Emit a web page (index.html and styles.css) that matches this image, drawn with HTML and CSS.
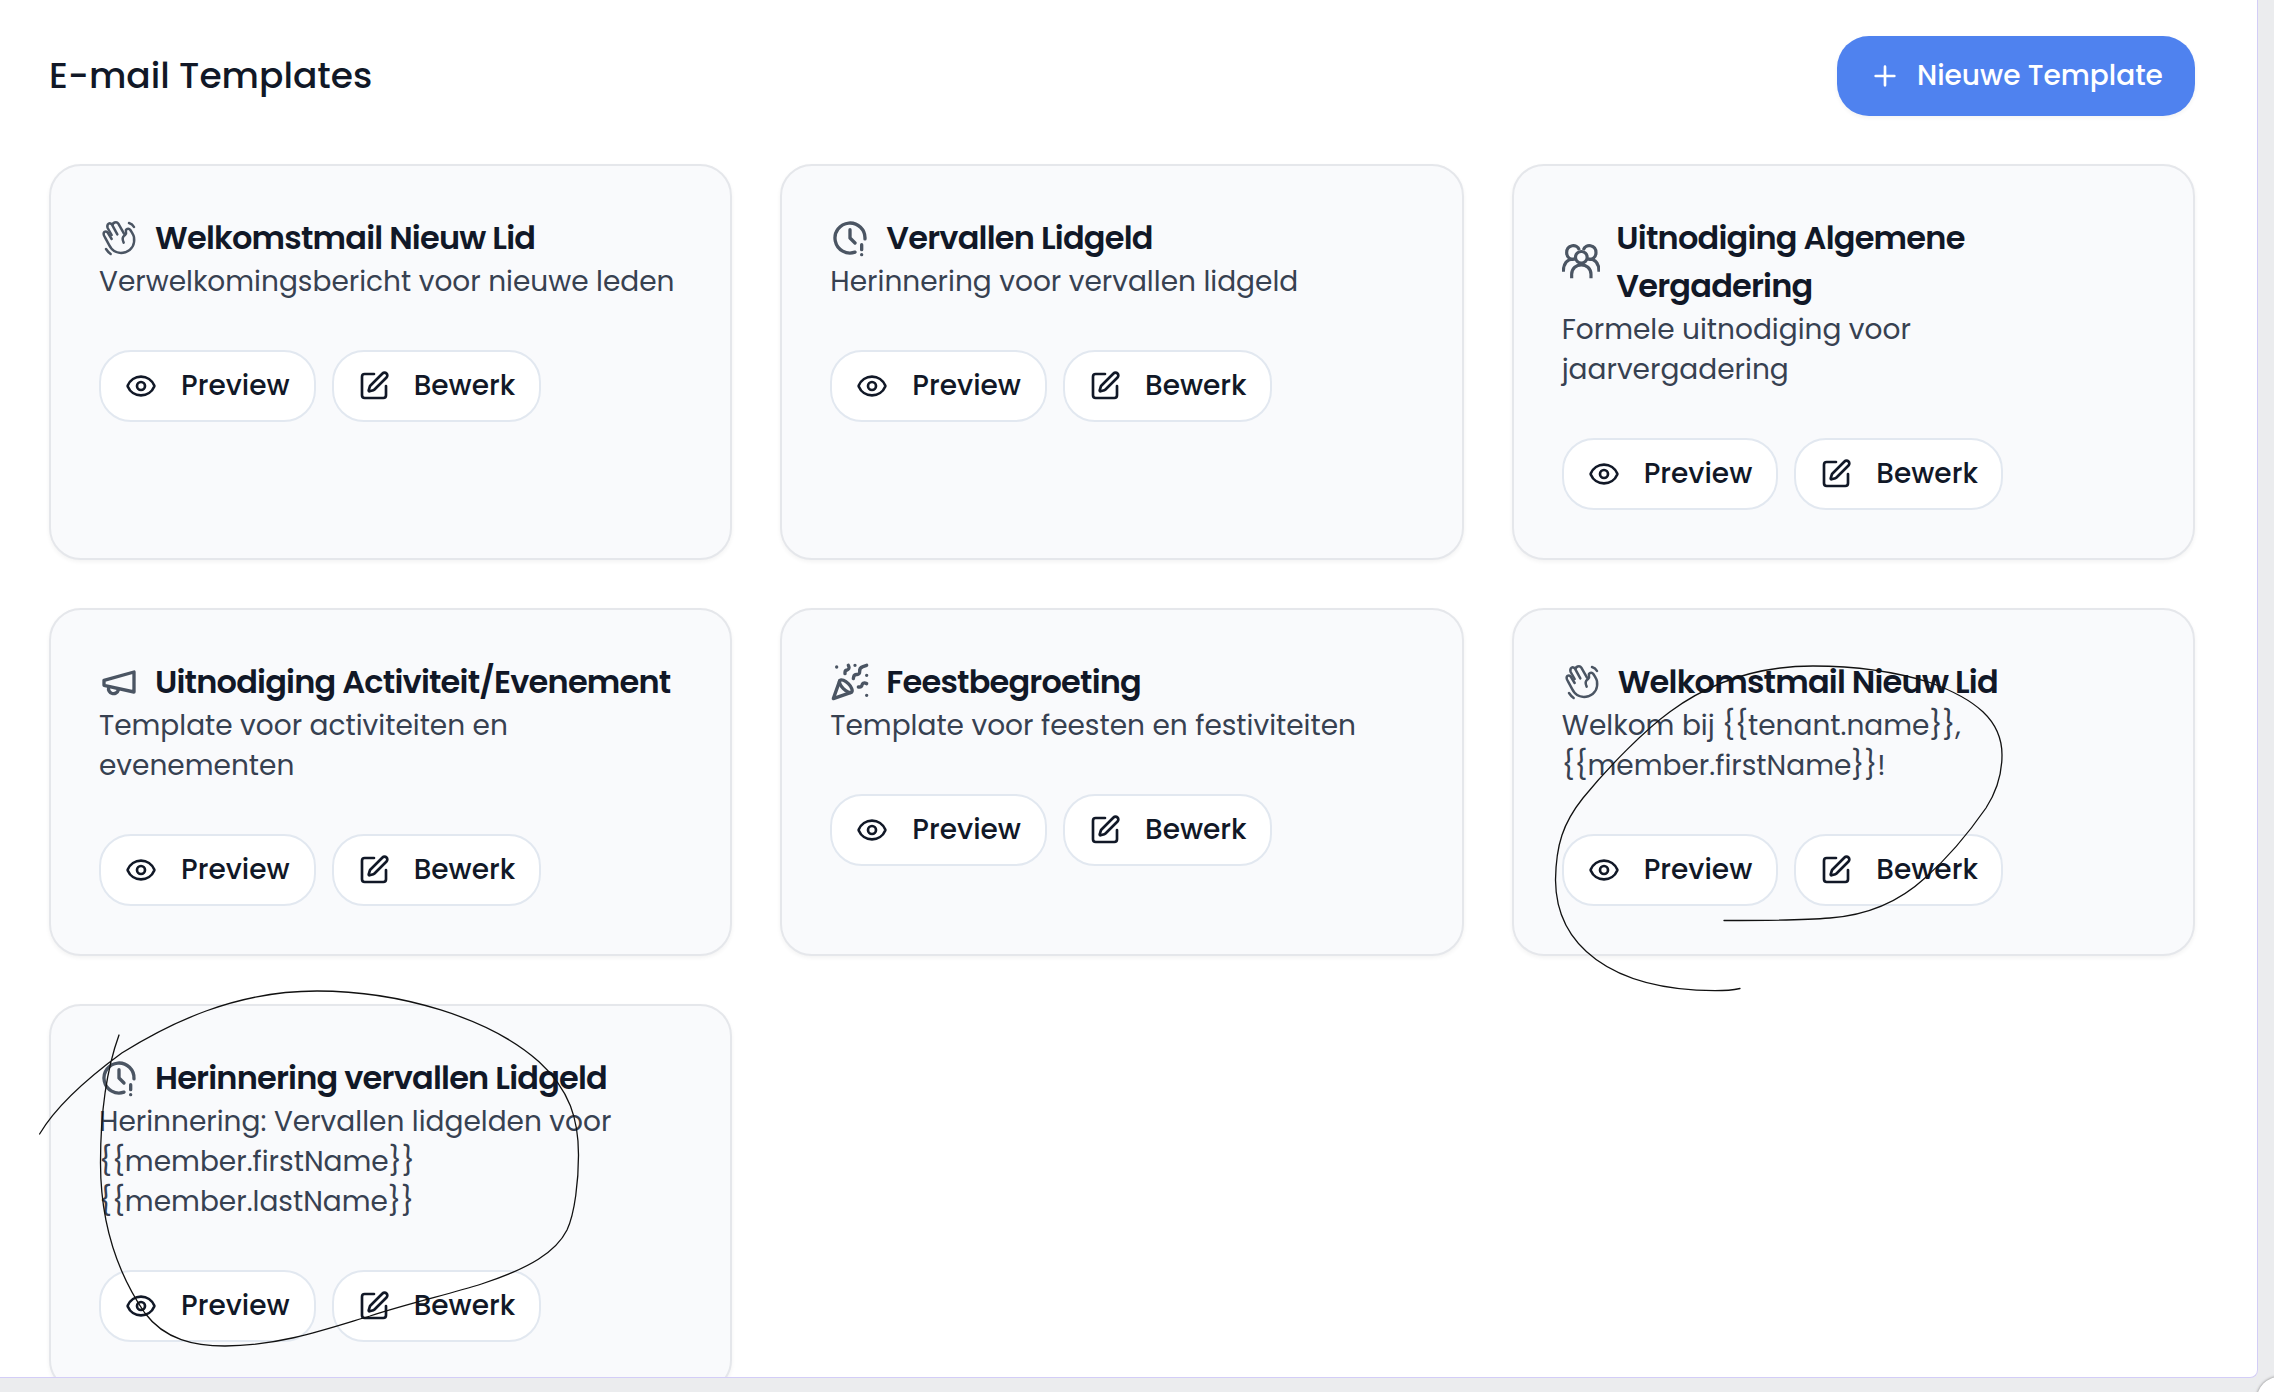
FILE: index.html
```html
<!DOCTYPE html>
<html lang="nl">
<head>
<meta charset="utf-8">
<title>E-mail Templates</title>
<link rel="stylesheet" href="styles.css">
</head>
<body>
<svg class="sprite" aria-hidden="true">
  <symbol id="eye" viewBox="0 0 24 24"><path d="M2.06 12.35a1 1 0 0 1 0-.7 10.75 10.75 0 0 1 19.88 0 1 1 0 0 1 0 .7 10.75 10.75 0 0 1-19.88 0"/><circle cx="12" cy="12" r="3"/></symbol>
  <symbol id="edit" viewBox="0 0 24 24"><path d="M12 3H5a2 2 0 0 0-2 2v14a2 2 0 0 0 2 2h14a2 2 0 0 0 2-2v-7"/><path d="M18.375 2.625a1 1 0 0 1 3 3l-9.013 9.014a2 2 0 0 1-.853.505l-2.873.84a.5.5 0 0 1-.62-.62l.84-2.873a2 2 0 0 1 .506-.852z"/></symbol>
  <symbol id="clock" viewBox="0 0 24 24"><path d="M20.986 12.502a9 9 0 1 0-5.973 7.98M12 7v5l3 3M19 16v3M19 22v.01"/></symbol>
  <symbol id="megaphone" viewBox="0 0 24 24"><path d="m3 11 18-5v12L3 14v-3z"/><path d="M11.6 16.8a3 3 0 1 1-5.8-1.6"/></symbol>
  <symbol id="party" viewBox="0 0 24 24"><path d="M5.8 11.3 2 22l10.7-3.79M4 3h.01M22 8h.01M15 2h.01M22 20h.01"/><path d="m22 2-2.24.75a2.9 2.9 0 0 0-1.96 3.12c.1.86-.57 1.63-1.45 1.63h-.38c-.86 0-1.6.6-1.76 1.44L14 10"/><path d="m22 13-.82-.33c-.86-.34-1.82.2-1.98 1.11c-.11.7-.72 1.22-1.43 1.22H17"/><path d="m11 2 .33.82c.34.86-.2 1.82-1.11 1.98C9.52 4.9 9 5.52 9 6.23V7"/><path d="M11 13c1.93 1.93 2.83 4.17 2 5-.83.83-3.07-.07-5-2-1.93-1.93-2.83-4.17-2-5 .83-.83 3.07.07 5 2Z"/></symbol>
  <symbol id="wave" viewBox="57 54 120 120"><path d="M95 117 84 99C79 91 70 95 71 103 71 106 73 109 75 112L88 136C98 156 117 162 136 157 156 150 165 132 162 112 161 107 159 103 156 98L151 90C146 83 136 87 138 95 140 101 137 103 134 106 127 111 127 120 131 128"/><path d="M95 105 83 84C79 73 90 65 96 74L112 103M102 85 98 78C96 67 110 63 115 71L132 101M147 69C154 71 159 75 162 81M78 147C82 153 86 158 92 162"/></symbol>
  <symbol id="people" viewBox="66 128 116 116"><circle cx="124" cy="171" r="17.5"/><path d="M107 175C92 181 80 171 80 157 80 133 111 128 118 149M141 175C156 181 168 171 168 157 168 133 137 128 130 149M95 234V222C95 184 153 184 153 222V234M70 214C70 190 81 176 101 176M177 214C177 190 167 176 147 176"/></symbol>
</svg>

<main class="panel">
  <header class="header">
    <h1 class="heading">E-mail Templates</h1>
    <button class="new-button"><svg class="icon-plus" viewBox="0 0 24 24"><path d="M12 5v14M5 12h14"/></svg><span>Nieuwe Template</span></button>
  </header>

  <section class="grid">
    <article class="card">
      <h2 class="title"><svg class="icon light"><use href="#wave"/></svg><span>Welkomstmail Nieuw Lid</span></h2>
      <p class="desc">Verwelkomingsbericht voor nieuwe leden</p>
      <div class="actions"><button class="action preview"><svg><use href="#eye"/></svg>Preview</button><button class="action edit"><svg><use href="#edit"/></svg>Bewerk</button></div>
    </article>
    <article class="card">
      <h2 class="title"><svg class="icon"><use href="#clock"/></svg><span>Vervallen Lidgeld</span></h2>
      <p class="desc">Herinnering voor vervallen lidgeld</p>
      <div class="actions"><button class="action preview"><svg><use href="#eye"/></svg>Preview</button><button class="action edit"><svg><use href="#edit"/></svg>Bewerk</button></div>
    </article>
    <article class="card">
      <h2 class="title"><svg class="icon group"><use href="#people"/></svg><span>Uitnodiging Algemene<br>Vergadering</span></h2>
      <p class="desc">Formele uitnodiging voor<br>jaarvergadering</p>
      <div class="actions"><button class="action preview"><svg><use href="#eye"/></svg>Preview</button><button class="action edit"><svg><use href="#edit"/></svg>Bewerk</button></div>
    </article>
    <article class="card">
      <h2 class="title"><svg class="icon"><use href="#megaphone"/></svg><span>Uitnodiging Activiteit/Evenement</span></h2>
      <p class="desc">Template voor activiteiten en<br>evenementen</p>
      <div class="actions"><button class="action preview"><svg><use href="#eye"/></svg>Preview</button><button class="action edit"><svg><use href="#edit"/></svg>Bewerk</button></div>
    </article>
    <article class="card">
      <h2 class="title"><svg class="icon"><use href="#party"/></svg><span>Feestbegroeting</span></h2>
      <p class="desc">Template voor feesten en festiviteiten</p>
      <div class="actions"><button class="action preview"><svg><use href="#eye"/></svg>Preview</button><button class="action edit"><svg><use href="#edit"/></svg>Bewerk</button></div>
    </article>
    <article class="card">
      <h2 class="title"><svg class="icon light"><use href="#wave"/></svg><span>Welkomstmail Nieuw Lid</span></h2>
      <p class="desc">Welkom bij {{tenant.name}},<br>{{member.firstName}}!</p>
      <div class="actions"><button class="action preview"><svg><use href="#eye"/></svg>Preview</button><button class="action edit"><svg><use href="#edit"/></svg>Bewerk</button></div>
    </article>
    <article class="card">
      <h2 class="title"><svg class="icon"><use href="#clock"/></svg><span>Herinnering vervallen Lidgeld</span></h2>
      <p class="desc">Herinnering: Vervallen lidgelden voor<br>{{member.firstName}}<br>{{member.lastName}}</p>
      <div class="actions"><button class="action preview"><svg><use href="#eye"/></svg>Preview</button><button class="action edit"><svg><use href="#edit"/></svg>Bewerk</button></div>
    </article>
  </section>
</main>

<div class="bubble"></div>
<svg class="ink" viewBox="0 0 2274 1392">
  <path d="M1724 920.5C1760 920.5 1800 920.5 1830 918 1870 915 1900 901 1925 878 1950 856 1970 831 1986 808 1997 791 2002 775 2002 755 2002 720 1975 699 1930 682.5 1890 670 1850 666 1813 666 1750 666 1705 686 1670 711.7 1645 730 1610 765 1583 798 1563 823 1556 845 1555.5 880 1556 945 1610 990 1715 990.7 1725 990.7 1733 990 1740 988.5"/>
  <path d="M119 1035C107 1068 100.5 1110 100.5 1163 100.5 1215 112 1265 144.8 1313 165 1340 195 1346 225 1346 280 1346 330 1328 370 1316 410 1303 450 1294 481.5 1284 530 1268 556 1252 567 1230 575 1213 578.5 1180 578.5 1155 578.5 1120 570 1090 539 1061.7 490 1018 400 991 317 991 235 991 170 1023 121.8 1053 85 1080 55 1108 39.6 1134"/>
</svg>
</body>
</html>
```
FILE: styles.css
```css
* { box-sizing: border-box; }

body {
  margin: 0;
  width: 2274px;
  height: 1392px;
  overflow: hidden;
  position: relative;
  background: #ebecee;
  color: #111827;
  font-family: Poppins, Inter, "Open Sans", sans-serif;
}

.sprite { display: none; }

svg {
  fill: none;
  stroke: currentColor;
  stroke-width: 2;
  stroke-linecap: round;
  stroke-linejoin: round;
  flex: none;
}

.panel {
  width: 2258px;
  height: 1378px;
  padding: 36px 62px 0 49px;
  overflow: hidden;
  background: #fff;
  border: solid #d3cdf7;
  border-width: 0 1px 1px 0;
  border-bottom-right-radius: 8px;
}

.header {
  display: flex;
  justify-content: space-between;
  align-items: center;
  height: 80px;
  margin-bottom: 48px;
}

.heading {
  margin: 0;
  font-size: 36px;
  font-weight: 500;
  line-height: 54px;
}

.new-button {
  display: flex;
  align-items: center;
  gap: 16px;
  width: 358px;
  height: 80px;
  padding: 0 32px;
  border: 0;
  border-radius: 32px;
  background: #4f82ef;
  box-shadow: 0 2px 4px rgba(0, 0, 0, .05);
  color: #fff;
  font: 500 28px Poppins, Inter, sans-serif;
  white-space: nowrap;
}

.icon-plus { width: 32px; height: 32px; }

.grid {
  display: grid;
  grid-template-columns: repeat(3, 1fr);
  gap: 48px;
}

.card {
  padding: 48px;
  border: 2px solid #e5e7eb;
  border-radius: 32px;
  background: #f9fafc;
  box-shadow: 0 2px 4px rgba(0, 0, 0, .05);
  white-space: nowrap;
}

.title {
  display: flex;
  align-items: center;
  gap: 16px;
  margin: 0;
  font-size: 32px;
  font-weight: 600;
  line-height: 48px;
  letter-spacing: -0.8px;
}

.icon { width: 40px; height: 40px; color: #4b5563; }
.icon.light { stroke-width: 7.5; }
.icon.group { width: 38.67px; height: 38.67px; stroke-width: 9.5; stroke-linecap: butt; }

.desc {
  margin: 0;
  color: #374151;
  font-size: 28px;
  line-height: 40px;
}

.actions { display: flex; gap: 16px; margin-top: 48px; }

.action {
  display: flex;
  align-items: center;
  gap: 24px;
  height: 72px;
  padding: 0 24px;
  border: 2px solid #e2e8f0;
  border-radius: 32px;
  background: #fff;
  color: #111827;
  font: 500 28px Poppins, Inter, sans-serif;
}

.action svg { width: 32px; height: 32px; }
.preview { width: 216.7px; }
.edit { width: 209px; }

.bubble {
  position: absolute;
  left: 2257px;
  top: 1377px;
  width: 44px;
  height: 44px;
  border-radius: 50%;
  background: #fff;
  box-shadow: 0 0 3px rgba(0, 0, 0, .5);
}

.ink {
  position: absolute;
  inset: 0;
  width: 2274px;
  height: 1392px;
  color: #111;
  stroke-width: 1.3;
}
```
